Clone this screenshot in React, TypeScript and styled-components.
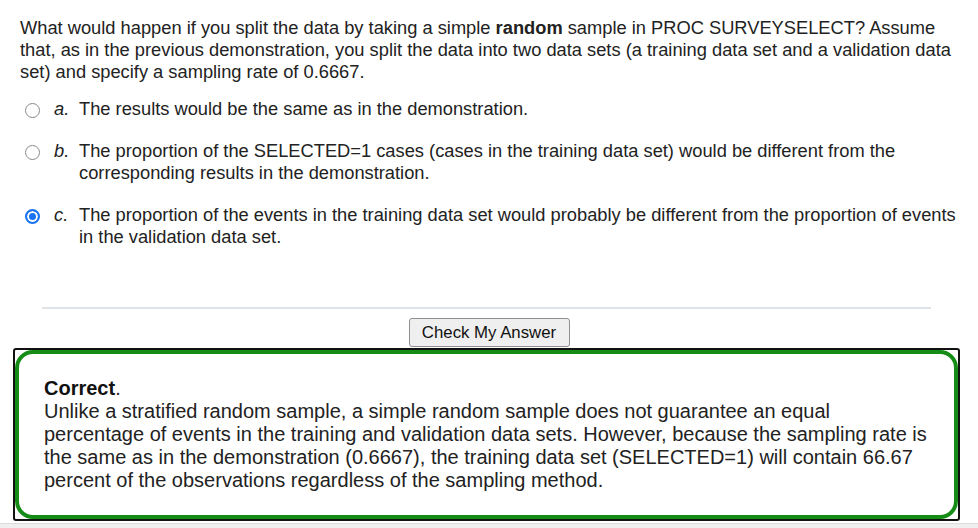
import React from "react";
import styled, { createGlobalStyle } from "styled-components";

const Global = createGlobalStyle`
  html, body { margin: 0; padding: 0; background: #fff; }
  body { font-family: "Liberation Sans", Arial, sans-serif; color: #222; }
`;

const Page = styled.div`
  width: 978px;
  height: 528px;
  overflow: hidden;
  display: flex;
  flex-direction: column;
`;

const Question = styled.p`
  margin: 0;
  padding: 17px 10px 0 20px;
  font-size: 18.3px;
  line-height: 22px;
`;

const Options = styled.div`
  display: flex;
  flex-direction: column;
  gap: 20px;
  margin: 15px 10px 0 25px;
`;

const Option = styled.label`
  display: grid;
  grid-template-columns: 15px 14px 25px 1fr;
  align-items: start;
  font-size: 18.3px;
  line-height: 22px;
`;

const Radio = styled.span<{ $checked?: boolean }>`
  box-sizing: border-box;
  width: 15px;
  height: 15px;
  margin-top: 5px;
  border-radius: 50%;
  border: ${(p) => (p.$checked ? "2px solid #1a73f0" : "1px solid #8a8a8a")};
  background: ${(p) => (p.$checked ? "#1a73f0" : "#fff")};
  box-shadow: ${(p) => (p.$checked ? "inset 0 0 0 2px #fff" : "none")};
  grid-column: 1;
`;

const Letter = styled.span`
  grid-column: 3;
  font-style: italic;
`;

const OptionText = styled.span`
  grid-column: 4;
`;

const Rule = styled.hr`
  margin: 59px 47px 0 42px;
  border: 0;
  border-top: 2px solid #e0e3e6;
  height: 0;
`;

const ButtonRow = styled.div`
  display: flex;
  justify-content: center;
  margin-top: 9px;
`;

const CheckButton = styled.button`
  box-sizing: border-box;
  height: 29px;
  width: 161px;
  padding: 0;
  font-family: "Liberation Sans", Arial, sans-serif;
  font-size: 16.8px;
  color: #111;
  background: #efefef;
  border: 1px solid #8f8f8f;
  border-radius: 3px;
`;

const FeedbackOuter = styled.div`
  margin: 1px 18px 0 13px;
  border: 2px solid #111;
  border-radius: 3px;
`;

const FeedbackInner = styled.div`
  border: 4px solid #158c15;
  border-radius: 18px;
  padding: 23px 8px 23px 25px;
  font-size: 20px;
  line-height: 23px;
  color: #222;
`;

const Verdict = styled.strong`
  font-weight: bold;
  color: #111;
`;

const Footer = styled.div`
  margin-top: 2px;
  flex: 1;
  background: #efefef;
  border-top: 1px solid #dcdcdc;
`;

const options = [
  { letter: "a.", text: "The results would be the same as in the demonstration.", checked: false },
  {
    letter: "b.",
    text: "The proportion of the SELECTED=1 cases (cases in the training data set) would be different from the corresponding results in the demonstration.",
    checked: false,
  },
  {
    letter: "c.",
    text: "The proportion of the events in the training data set would probably be different from the proportion of events in the validation data set.",
    checked: true,
  },
];

export default function App() {
  return (
    <Page>
      <Global />
      <Question>
        What would happen if you split the data by taking a simple <b>random</b> sample in PROC SURVEYSELECT? Assume
        <br />
        that, as in the previous demonstration, you split the data into two data sets (a training data set and a
        validation data
        <br />
        set) and specify a sampling rate of 0.6667.
      </Question>
      <Options>
        {options.map((o) => (
          <Option key={o.letter}>
            <Radio $checked={o.checked} />
            <Letter>{o.letter}</Letter>
            <OptionText>{o.text}</OptionText>
          </Option>
        ))}
      </Options>
      <Rule />
      <ButtonRow>
        <CheckButton>Check My Answer</CheckButton>
      </ButtonRow>
      <FeedbackOuter>
        <FeedbackInner>
          <Verdict>Correct</Verdict>.
          <br />
          Unlike a stratified random sample, a simple random sample does not guarantee an equal
          <br />
          percentage of events in the training and validation data sets. However, because the sampling rate is
          <br />
          the same as in the demonstration (0.6667), the training data set (SELECTED=1) will contain 66.67
          <br />
          percent of the observations regardless of the sampling method.
        </FeedbackInner>
      </FeedbackOuter>
      <Footer />
    </Page>
  );
}
